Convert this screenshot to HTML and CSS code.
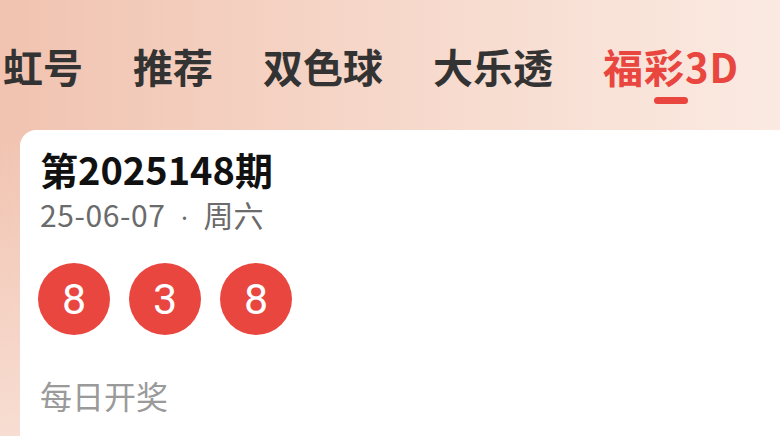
FILE: index.html
```html
<!DOCTYPE html>
<html lang="zh-CN">
<head>
<meta charset="utf-8">
<link rel="stylesheet" href="styles.css">
</head>
<body>
<div class="page">
  <nav class="tabs">
    <div class="tab"><span class="tab-label">虹号</span></div>
    <div class="tab"><span class="tab-label">推荐</span></div>
    <div class="tab"><span class="tab-label">双色球</span></div>
    <div class="tab"><span class="tab-label">大乐透</span></div>
    <div class="tab active"><span class="tab-label">福彩3D</span><span class="indicator"></span></div>
  </nav>
  <section class="card">
    <h1 class="issue">第2025148期</h1>
    <div class="date"><span class="day">25-06-07</span><span class="sep">·</span>周六</div>
    <div class="balls">
      <span class="ball">8</span>
      <span class="ball">3</span>
      <span class="ball">8</span>
    </div>
    <div class="note">每日开奖</div>
  </section>
</div>
</body>
</html>
```
FILE: styles.css
```css
html, body {
  margin: 0;
  padding: 0;
}
body {
  width: 780px;
  height: 436px;
  overflow: hidden;
  font-family: "Noto Sans CJK SC", "Noto Sans", sans-serif;
}
.page {
  height: 436px;
  background:
    linear-gradient(180deg, rgba(255,255,255,0) 0%, rgba(255,255,255,0) 30%, rgba(250,232,224,0.7) 100%),
    linear-gradient(90deg, #f1c3b0 0%, #f6d8ca 50%, #fbeae2 100%);
  overflow: hidden;
}
.tabs {
  display: flex;
  align-items: flex-start;
  gap: 50px;
  padding: 44px 0 0 3px;
  height: 86px;
  white-space: nowrap;
}
.tab {
  display: flex;
  flex-direction: column;
  align-items: center;
}
.tab-label {
  font-size: 40px;
  line-height: 44px;
  font-weight: 700;
  color: #333333;
}
.tab.active .tab-label {
  color: #e8463e;
  letter-spacing: 1px;
}
.indicator {
  margin-top: 9px;
  width: 34px;
  height: 7px;
  border-radius: 4px;
  background: #e8463e;
}
.card {
  margin-left: 20px;
  width: 820px;
  height: 320px;
  background: #ffffff;
  border-radius: 16px;
  padding: 16px 20px;
  box-sizing: border-box;
}
.issue {
  margin: 0;
  font-size: 38px;
  line-height: 46px;
  font-weight: 700;
  color: #111111;
}
.date {
  margin-top: 4px;
  font-size: 30px;
  line-height: 36px;
  color: #6b6b6b;
  white-space: nowrap;
}
.day {
  letter-spacing: 0.6px;
}
.sep {
  display: inline-block;
  width: 38px;
  text-align: center;
  font-family: "Noto Sans", sans-serif;
  font-size: 26px;
}
.balls {
  display: flex;
  gap: 19px;
  margin: 28px 0 0 -2px;
}
.ball {
  width: 72px;
  height: 72px;
  border-radius: 50%;
  background: #e8463f;
  color: #ffffff;
  display: flex;
  align-items: center;
  justify-content: center;
  font-family: Roboto, "Noto Sans", sans-serif;
  font-size: 43px;
  font-weight: 400;
  line-height: 1;
}
.note {
  margin-top: 40px;
  font-size: 32px;
  line-height: 40px;
  color: #9a9a9a;
}
```
